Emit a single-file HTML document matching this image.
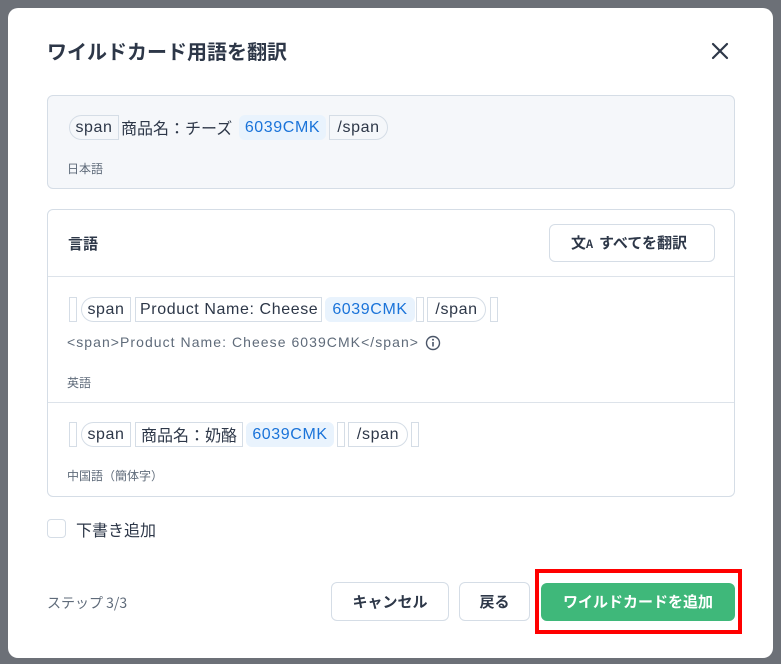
<!DOCTYPE html>
<html><head><meta charset="utf-8"><style>
*{box-sizing:border-box;margin:0;padding:0}
body{width:781px;height:664px;background:#6c7077;font-family:"Liberation Sans","Noto Sans CJK JP",sans-serif;position:relative;overflow:hidden;color:#2d3748}
.modal{position:absolute;left:8px;top:8px;width:765px;height:650px;background:#fff;border-radius:10px}
.abs{position:absolute}
.title{left:47px;top:36px;font-size:20px;font-weight:bold;color:#2d3748;font-family:"Noto Sans CJK JP",sans-serif}
.src{left:47px;top:95px;width:688px;height:94px;background:#f5f7fa;border:1px solid #d5dde6;border-radius:6px}
.card{left:47px;top:209px;width:688px;height:288px;border:1px solid #d5dde6;border-radius:6px}
.tag{position:absolute;height:25px;border:1px solid #d5dde6;font-size:16px;line-height:23px;color:#2d3748;padding:0 4px;background:#fff;letter-spacing:0.6px;white-space:nowrap;text-align:center}
.l{border-radius:13px 0 0 13px}
.r{border-radius:0 13px 13px 0}
.blue{background:#e9f3fd;border-color:#e9f3fd;color:#1a73d9;border-radius:6px}
.bar{position:absolute;width:8px;height:25px;border:1px solid #d5dde6;background:#fff}
.small{font-size:12px;color:#5f6b7a;font-family:"Noto Sans CJK JP",sans-serif}
.btn{position:absolute;border:1px solid #d5dde6;border-radius:6px;background:#fff;font-size:15px;font-weight:bold;text-align:center;font-family:"Noto Sans CJK JP",sans-serif;color:#2d3748}
</style></head><body>
<div class="modal"></div>
<div class="abs title">ワイルドカード用語を翻訳</div>
<svg class="abs" style="left:711px;top:42px" width="18" height="18" viewBox="0 0 18 18"><path d="M2 2L16 16M16 2L2 16" stroke="#2d3748" stroke-width="2.2" stroke-linecap="round"/></svg>

<div class="abs src"></div>
<div class="tag l" style="left:69px;top:115px;width:50px;background:#f5f7fa">span</div>
<div class="abs" style="left:121px;top:116px;font-size:16px;line-height:23px;font-family:'Noto Sans CJK JP',sans-serif">商品名：チーズ</div>
<div class="tag blue" style="left:239px;top:115px;width:87px">6039CMK</div>
<div class="tag r" style="left:329px;top:115px;width:59px;background:#f5f7fa">/span</div>
<div class="abs small" style="left:67px;top:160px">日本語</div>

<div class="abs card"></div>
<div class="abs" style="left:68px;top:233px;font-size:15px;font-weight:bold;font-family:'Noto Sans CJK JP',sans-serif">言語</div>
<div class="btn" style="left:549px;top:224px;width:166px;height:38px;line-height:36px;padding-left:22px">すべてを翻訳</div>
<div class="abs" style="left:571px;top:232px;font-size:15px;font-weight:bold;font-family:'Noto Sans CJK JP',sans-serif">文<span style="font-size:11px">A</span></div>
<div class="abs" style="left:48px;top:276px;width:686px;height:1px;background:#dde3ea"></div>
<div class="abs" style="left:48px;top:402px;width:686px;height:1px;background:#dde3ea"></div>

<div class="bar" style="left:69px;top:297px"></div>
<div class="tag l" style="left:81px;top:297px;width:50px">span</div>
<div class="tag" style="left:135px;top:297px;width:187px">Product Name: Cheese</div>
<div class="tag blue" style="left:325px;top:297px;width:90px">6039CMK</div>
<div class="bar" style="left:416px;top:297px"></div>
<div class="tag r" style="left:427px;top:297px;width:59px">/span</div>
<div class="bar" style="left:490px;top:297px"></div>
<div class="abs" style="left:67px;top:334px;font-size:14px;color:#5f6b7a;letter-spacing:1.05px;white-space:nowrap">&lt;span&gt;Product Name: Cheese 6039CMK&lt;/span&gt;</div>
<svg class="abs" style="left:425px;top:335px" width="16" height="16" viewBox="0 0 16 16"><circle cx="8" cy="8" r="6.5" fill="none" stroke="#4a5568" stroke-width="1.4"/><path d="M8 7v4.5" stroke="#4a5568" stroke-width="1.6"/><circle cx="8" cy="4.8" r="1" fill="#4a5568"/></svg>
<div class="abs small" style="left:67px;top:374px">英語</div>

<div class="bar" style="left:69px;top:422px"></div>
<div class="tag l" style="left:81px;top:422px;width:50px">span</div>
<div class="tag" style="left:135px;top:422px;width:108px;font-family:'Noto Sans CJK JP',sans-serif;letter-spacing:0">商品名：奶酪</div>
<div class="tag blue" style="left:246px;top:422px;width:88px">6039CMK</div>
<div class="bar" style="left:337px;top:422px"></div>
<div class="tag r" style="left:348px;top:422px;width:60px">/span</div>
<div class="bar" style="left:411px;top:422px"></div>
<div class="abs small" style="left:67px;top:467px">中国語（簡体字）</div>

<div class="abs" style="left:47px;top:519px;width:19px;height:19px;border:1px solid #d5dde6;border-radius:4px"></div>
<div class="abs" style="left:76px;top:517px;font-size:16px;font-family:'Noto Sans CJK JP',sans-serif">下書き追加</div>

<div class="abs" style="left:47px;top:593px;font-size:14px;color:#5f6b7a;font-family:'Noto Sans CJK JP',sans-serif">ステップ 3/3</div>
<div class="btn" style="left:331px;top:582px;width:118px;height:39px;line-height:37px">キャンセル</div>
<div class="btn" style="left:459px;top:582px;width:71px;height:39px;line-height:37px">戻る</div>
<div class="abs" style="left:535px;top:569px;width:207px;height:65px;border:4px solid #ff0000"></div>
<div class="btn" style="left:541px;top:583px;width:194px;height:38px;line-height:38px;background:#3fb87a;border:none;color:#fff">ワイルドカードを追加</div>
</body></html>
